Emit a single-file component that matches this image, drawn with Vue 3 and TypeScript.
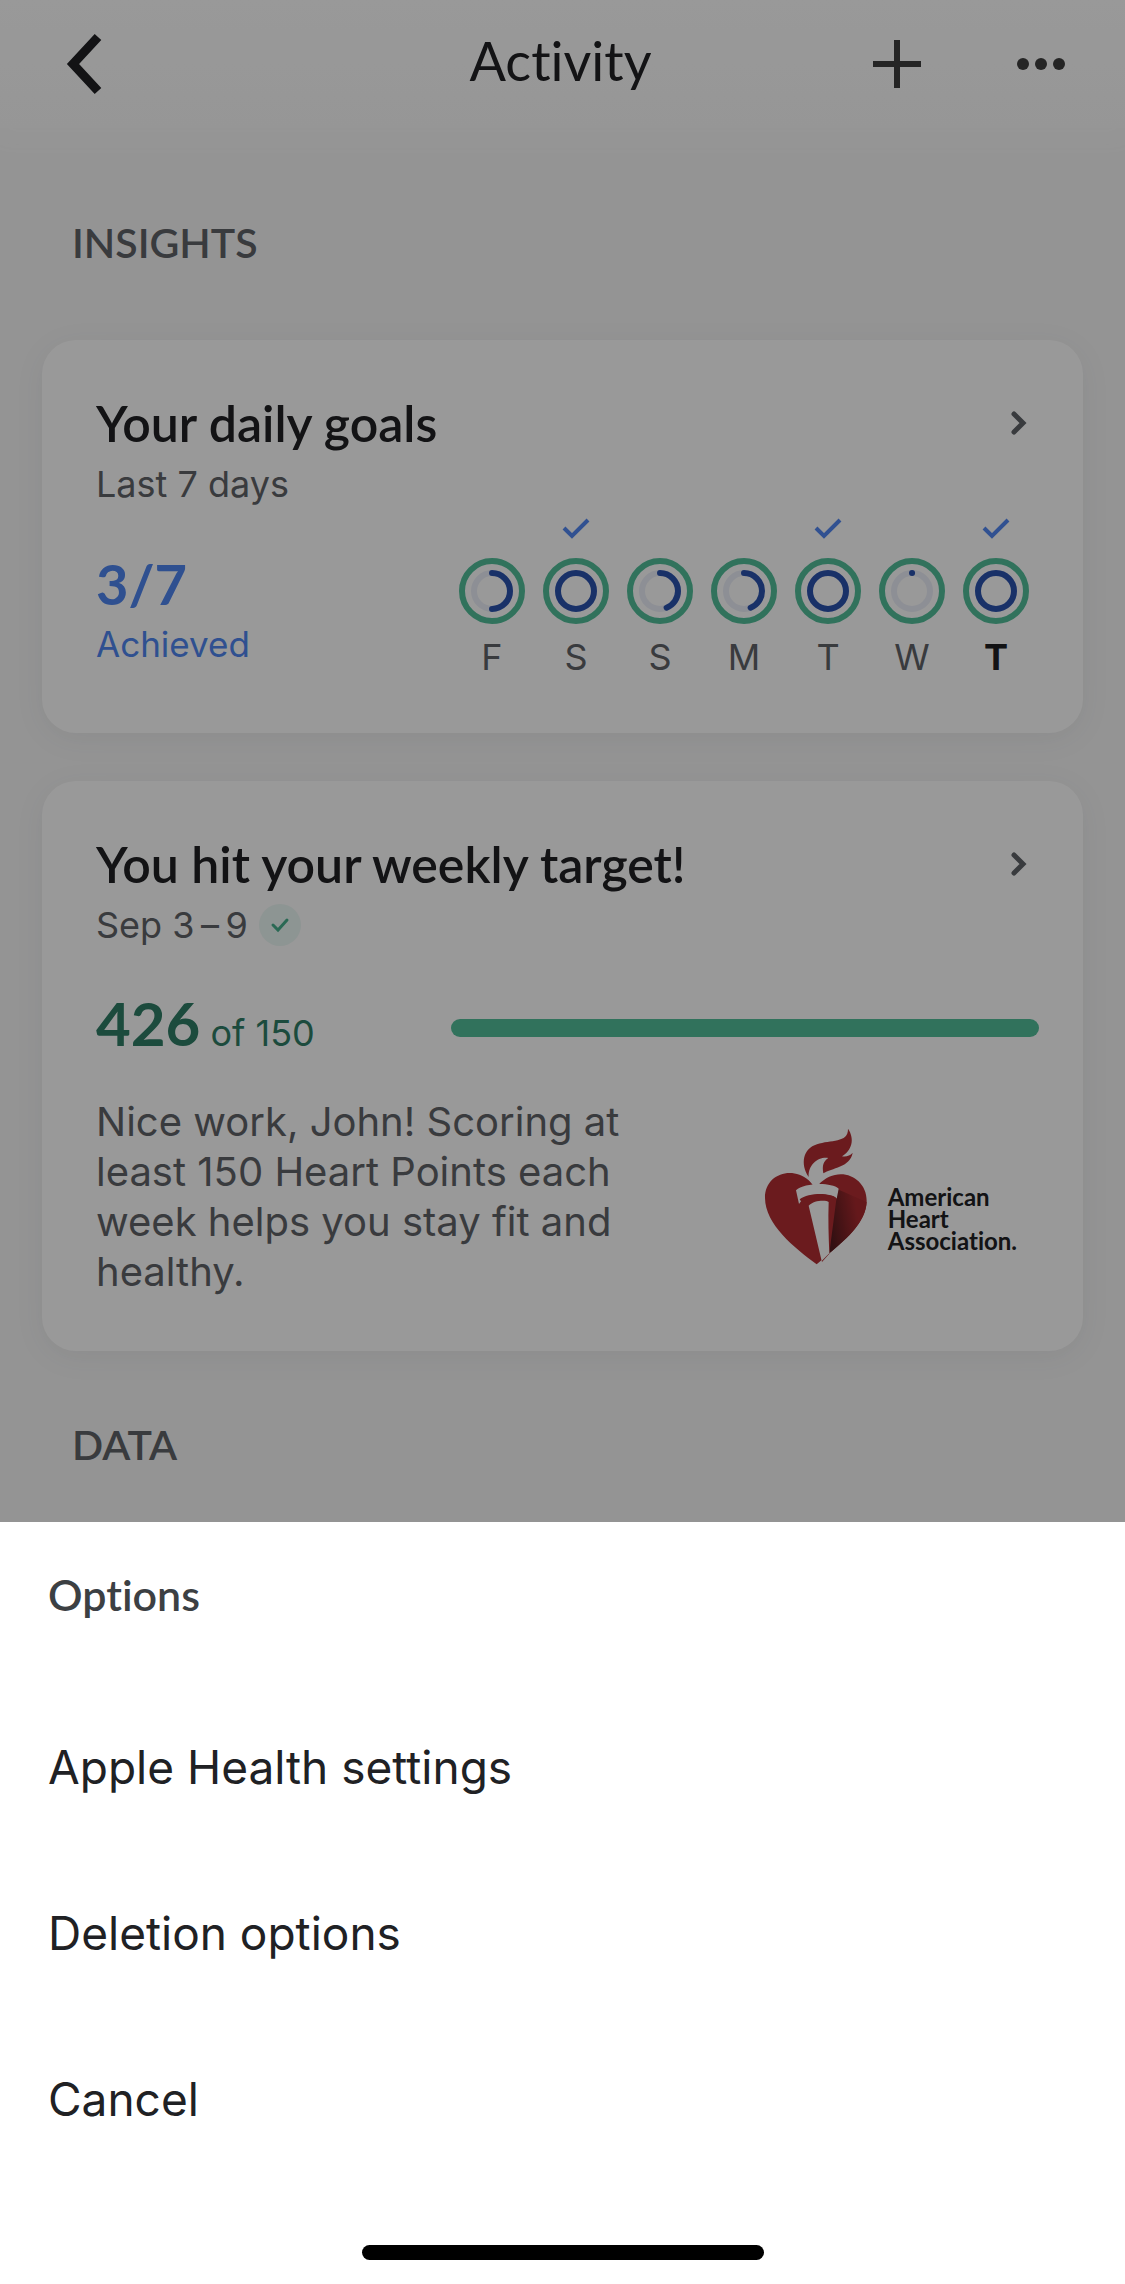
<script setup lang="ts">
interface Day {
  label: string
  progress: number
  today?: boolean
}

const days: Day[] = [
  { label: 'F', progress: 50 },
  { label: 'S', progress: 100 },
  { label: 'S', progress: 44 },
  { label: 'M', progress: 44 },
  { label: 'T', progress: 100 },
  { label: 'W', progress: 0.1 },
  { label: 'T', progress: 100, today: true },
]

const actions: string[] = ['Apple Health settings', 'Deletion options', 'Cancel']
</script>

<template>
  <div class="screen">
    <div class="page">
      <header class="bar">
        <button class="icon-button back" type="button" aria-label="Back">
          <svg width="60" height="64" viewBox="0 0 60 64"><path d="M42 5 17 32l25 27" fill="none" stroke="#202124" stroke-width="9" /></svg>
        </button>
        <h1>Activity</h1>
        <div class="tools">
          <button class="icon-button" type="button" aria-label="Add">
            <svg width="48" height="48" viewBox="0 0 48 48"><path d="M24 0v48M0 24h48" stroke="#3e3e3e" stroke-width="6" /></svg>
          </button>
          <button class="icon-button" type="button" aria-label="More options">
            <svg width="48" height="48" viewBox="0 0 48 48" fill="#3e3e3e"><circle cx="6" cy="24" r="6" /><circle cx="24" cy="24" r="6" /><circle cx="42" cy="24" r="6" /></svg>
          </button>
        </div>
      </header>

      <main>
        <h2 class="section">INSIGHTS</h2>

        <article class="card">
          <div class="card-head">
            <h3>Your daily goals</h3>
            <svg class="chevron" width="24" height="30" viewBox="0 0 24 30"><path d="m9 6 9 9-9 9" /></svg>
          </div>
          <p class="sub">Last 7 days</p>
          <div class="goals">
            <div class="score">
              <strong>3/7</strong>
              <span>Achieved</span>
            </div>
            <ul class="days">
              <li v-for="(day, i) in days" :key="i" :class="{ today: day.today }">
                <svg class="tick" width="28" height="22" viewBox="0 0 28 22">
                  <path v-if="day.progress === 100" d="m2 10 8 8L26 2" />
                </svg>
                <svg class="ring" width="66" height="66" viewBox="0 0 66 66">
                  <circle cx="33" cy="33" r="30" stroke="#52bf9a" />
                  <circle cx="33" cy="33" r="18" stroke="#eceff8" />
                  <circle class="arc" cx="33" cy="33" r="18" stroke="#2b52ae" pathLength="100" :stroke-dasharray="`${day.progress} 100`" />
                </svg>
                <span>{{ day.label }}</span>
              </li>
            </ul>
          </div>
        </article>

        <article class="card">
          <div class="card-head">
            <h3>You hit your weekly target!</h3>
            <svg class="chevron" width="24" height="30" viewBox="0 0 24 30"><path d="m9 6 9 9-9 9" /></svg>
          </div>
          <p class="sub">
            Sep 3&#8201;–&#8201;9
            <svg class="badge" width="42" height="42" viewBox="0 0 42 42"><circle cx="21" cy="21" r="21" fill="#ecf8f5" /><path d="m14 21 5 5 9-10" fill="none" stroke="#46b08d" stroke-width="3" stroke-linecap="round" /></svg>
          </p>
          <div class="target">
            <p class="points"><strong>426</strong> of 150</p>
            <div class="meter"></div>
          </div>
          <div class="message">
            <p>Nice work, John! Scoring at least 150 Heart Points each week helps you stay fit and healthy.</p>
            <div class="partner">
              <svg width="104" height="138" viewBox="0 0 312 414">
                <defs>
                  <linearGradient id="shade" x1="0" y1="0.6" x2="1" y2="0.3">
                    <stop offset="0" stop-color="#541b1e" />
                    <stop offset="0.75" stop-color="#a8292e" />
                  </linearGradient>
                </defs>
                <path d="M158 409C90 358 4 290 3 210C2 140 82 112 134 157L148 171L163 171C220 108 308 145 308 218C308 284 240 337 196 376L174 395Z" fill="#b22e33" />
                <path d="M221 184L308 222C304 290 235 343 196 376Z" fill="url(#shade)" />
                <path d="M133 152C128 91 160 86 192 90C178 102 174 112 177 132L160 172H147Z" fill="#fff" />
                <path d="M96 187C121 164 201 162 224 182L218 212C205 194 124 195 105 228Z" fill="#fff" />
                <path d="M107 214C134 192 204 194 218 211C214 224 204 230 194 230L196 377L174 402L135 235C123 232 113 226 107 214Z" fill="#b22e33" />
                <path d="M134 233C150 215 188 216 194 222C192 274 194 326 196 376L173 399Z" fill="#fff" />
                <path d="M134 147C108 108 117 61 159 49C199 34 253 46 252 2C274 35 262 68 234 85C248 87 258 83 266 74C258 119 203 119 178 136C174 112 178 100 193 90C165 85 132 108 134 147Z" fill="#b22e33" />
              </svg>
              <p class="partner-name">American<br />Heart<br />Association.</p>
            </div>
          </div>
        </article>

        <h2 class="section last">DATA</h2>
      </main>
    </div>

    <section class="sheet" role="dialog" aria-labelledby="sheet-title">
      <h2 id="sheet-title">Options</h2>
      <button v-for="action in actions" :key="action" class="action" type="button">{{ action }}</button>
      <div class="home"></div>
    </section>
  </div>
</template>

<style>
body {
  margin: 0;
  background: #fff;
}
</style>

<style scoped>
.screen {
  min-height: 100vh;
  display: flex;
  flex-direction: column;
  font-family: Inter, "Liberation Sans", sans-serif;
  font-variant-ligatures: none;
  color: #202124;
}
h1, h2, h3, p, ul {
  margin: 0;
  padding: 0;
  font-weight: 400;
}
svg {
  display: block;
  flex: none;
}
button {
  border: 0;
  padding: 0;
  background: none;
  font: inherit;
  font-variant-ligatures: none;
  color: inherit;
}
.page {
  position: relative;
  flex: 1;
  background: #f7f7f7;
}
.page::after {
  content: "";
  position: absolute;
  inset: 0;
  background: rgba(0, 0, 0, 0.4);
}
.bar {
  height: 128px;
  margin-bottom: 69px;
  padding: 0 60px 0 56px;
  display: grid;
  grid-template-columns: 1fr auto 1fr;
  align-items: center;
  background: linear-gradient(#fff, #fbfbfb);
  box-shadow: 0 8px 20px 4px #fafafa;
}
.bar h1 {
  padding-bottom: 6px;
  font-family: Lato, sans-serif;
  font-size: 54px;
  line-height: 64px;
}
.tools {
  display: flex;
  justify-content: flex-end;
  gap: 96px;
}
main {
  padding: 0 42px;
}
.section {
  padding-left: 30px;
  margin-bottom: 51px;
  font-family: Lato, sans-serif;
  font-size: 41px;
  font-weight: 600;
  line-height: 92px;
  color: #5f6368;
}
.section.last {
  margin-bottom: 31px;
}
.card {
  margin-bottom: 48px;
  padding: 55px 54px 54px;
  border-radius: 34px;
  background: #fff;
  box-shadow: 0 6px 30px rgba(60, 70, 80, 0.07);
}
.card-head {
  display: flex;
  justify-content: space-between;
  align-items: center;
}
.card-head h3 {
  font-family: Lato, sans-serif;
  font-size: 50px;
  font-weight: 600;
  line-height: 56px;
}
.chevron {
  fill: none;
  stroke: #5f6368;
  stroke-width: 5;
  stroke-linecap: round;
}
.sub {
  display: flex;
  align-items: center;
  gap: 11px;
  height: 44px;
  margin-top: 11px;
  font-size: 36px;
  line-height: 44px;
  color: #5f6368;
}
.goals {
  display: flex;
  justify-content: space-between;
}
.score {
  padding-top: 46px;
  display: flex;
  flex-direction: column;
  color: #4f86f0;
}
.score strong {
  font-family: Lato, sans-serif;
  font-size: 56px;
  line-height: 64px;
}
.score span {
  font-size: 35px;
  line-height: 56px;
}
.days {
  display: flex;
  gap: 18px;
  padding-top: 12px;
  list-style: none;
}
.days li {
  display: flex;
  flex-direction: column;
  align-items: center;
  font-size: 36px;
  line-height: 44px;
  color: #5f6368;
}
.days .today {
  font-weight: 700;
  color: #202124;
}
.tick {
  margin-bottom: 18px;
  fill: none;
  stroke: #5288f2;
  stroke-width: 4;
}
.ring {
  margin-bottom: 11px;
  fill: none;
  stroke-width: 6;
}
.arc {
  stroke-linecap: round;
  transform: rotate(-90deg);
  transform-origin: center;
}
.target {
  display: flex;
  align-items: center;
  justify-content: space-between;
  margin-top: 44px;
  margin-right: -10px;
}
.points {
  font-size: 36px;
  line-height: 64px;
  color: #2f7d66;
}
.points strong {
  font-family: Lato, sans-serif;
  font-size: 60px;
}
.meter {
  width: 588px;
  height: 18px;
  border-radius: 9px;
  background: #52bf9a;
}
.message {
  display: flex;
  justify-content: space-between;
  align-items: center;
  margin-top: 32px;
  font-size: 40px;
  line-height: 50px;
  color: #5f6368;
}
.message > p {
  width: 60%;
}
.partner {
  display: flex;
  align-items: center;
  gap: 20px;
  margin-right: 12px;
}
.partner-name {
  padding-top: 44px;
  font-family: Lato, sans-serif;
  font-size: 24px;
  font-weight: 700;
  line-height: 22px;
  color: #202124;
}
.sheet {
  padding: 40px 0 24px;
  display: flex;
  flex-direction: column;
  background: #fff;
}
.sheet h2 {
  padding: 0 48px;
  margin-bottom: 56px;
  font-family: Lato, sans-serif;
  font-size: 43px;
  font-weight: 600;
  line-height: 66px;
  color: #3c4043;
}
.action {
  height: 166px;
  padding: 0 48px;
  font-size: 46px;
  text-align: left;
}
.home {
  width: 402px;
  height: 15px;
  margin: 63px auto 0;
  border-radius: 8px;
  background: #000;
}
</style>
